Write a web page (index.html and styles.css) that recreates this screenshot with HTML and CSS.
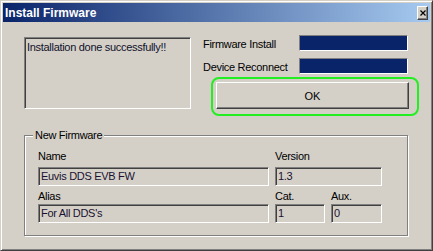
FILE: index.html
```html
<!DOCTYPE html>
<html lang="en">
<head>
    <meta charset="UTF-8">
    <meta name="viewport" content="width=device-width, initial-scale=1.0">
    <title>Install Firmware</title>
    <link rel="stylesheet" href="styles.css">
</head>
<body>
    <div class="window">
        <div class="titlebar">
            <span class="title">Install Firmware</span>
            <button class="close" title="Close">
                <svg width="6" height="6" viewBox="0 0 6 6"><path d="M0.5 0.5 L5.5 5.5 M5.5 0.5 L0.5 5.5" stroke="#000" stroke-width="1.2" fill="none"/></svg>
            </button>
        </div>

        <div class="content">
            <div class="top">
                <div class="message">Installation done successfully!!</div>

                <div class="status">
                    <div class="status-grid">
                        <span class="status-label">Firmware Install</span>
                        <div class="bar"></div>
                        <span class="status-label">Device Reconnect</span>
                        <div class="bar"></div>
                    </div>
                    <div class="focus-ring">
                        <button class="btn-ok">OK</button>
                    </div>
                </div>
            </div>

            <!-- Riquadro nuovo firmware -->
            <div class="group">
                <span class="legend">New Firmware</span>
                <div class="fields">
                    <div class="field field-top field-wide">
                        <span class="label">Name</span>
                        <div class="input">Euvis DDS EVB FW</div>
                    </div>
                    <div class="field field-top field-span">
                        <span class="label">Version</span>
                        <div class="input">1.3</div>
                    </div>
                    <div class="field field-bottom">
                        <span class="label">Alias</span>
                        <div class="input">For All DDS's</div>
                    </div>
                    <div class="field field-bottom">
                        <span class="label">Cat.</span>
                        <div class="input">1</div>
                    </div>
                    <div class="field field-bottom">
                        <span class="label">Aux.</span>
                        <div class="input">0</div>
                    </div>
                </div>
            </div>
        </div>
    </div>
</body>
</html>
```

FILE: styles.css
```css
/* Finestra stile Windows classico */
body {
    margin: 0;
    padding: 0;
    font-family: 'Liberation Sans', Arial, sans-serif;
    font-size: 11px;
    letter-spacing: -0.3px;
    color: #000;
    background: #d4d0c8;
}

.window {
    width: 433px;
    height: 251px;
    box-sizing: border-box;
    background: #d4d0c8;
    border: 1px solid;
    border-color: #d4d0c8 #404040 #404040 #d4d0c8;
    box-shadow: inset 1px 1px #fff, inset -1px -1px #808080;
    padding: 2px;
}

.titlebar {
    height: 19px;
    display: flex;
    align-items: center;
    justify-content: space-between;
    background: linear-gradient(to right, #0a246a, #a6caf0);
}

.title {
    color: #fff;
    font-weight: bold;
    font-size: 12px;
    letter-spacing: 0;
    padding-left: 2px;
}

.close {
    width: 11px;
    height: 14px;
    margin: 1px 2px 0 0;
    padding: 0;
    display: flex;
    align-items: center;
    justify-content: center;
    background: #d4d0c8;
    border: 1px solid;
    border-color: #fff #404040 #404040 #fff;
    box-shadow: inset -1px -1px #808080;
    box-sizing: border-box;
}

.content {
    padding: 15px 0 0 21px;
}

.top {
    display: flex;
    align-items: flex-start;
}

.message {
    width: 167px;
    height: 72px;
    box-sizing: border-box;
    border: 1px solid;
    border-color: #808080 #fff #fff #808080;
    box-shadow: inset 1px 1px #404040, inset -1px -1px #d4d0c8;
    padding: 3px 2px;
    line-height: 13px;
    color: #10102a;
}

.status {
    margin: -2px 0 0 12px;
}

.status-grid {
    display: grid;
    grid-template-columns: 96px 109px;
    grid-auto-rows: 16px;
    row-gap: 7px;
    align-items: center;
}

.status-label {
    line-height: 13px;
    padding-top: 2px;
}

.bar {
    height: 16px;
    box-sizing: border-box;
    border: 1px solid;
    border-color: #808080 #fff #fff #808080;
    background: #0a246a;
}

.focus-ring {
    width: 208px;
    height: 39px;
    box-sizing: border-box;
    margin: 3px 0 0 8px;
    padding: 3px 0 0 3px;
    border: 2px solid #22ee22;
    border-radius: 8px;
}

.btn-ok {
    width: 193px;
    height: 27px;
    box-sizing: border-box;
    padding: 0;
    font-family: 'Liberation Sans', Arial, sans-serif;
    font-size: 11px;
    color: #000;
    background: #d4d0c8;
    border: 1px solid;
    border-color: #fff #404040 #404040 #fff;
    box-shadow: inset -1px -1px #808080;
}

.group {
    position: relative;
    width: 384px;
    height: 101px;
    box-sizing: border-box;
    margin-top: 19px;
    border: 1px solid #808080;
    box-shadow: inset 1px 1px #fff, 1px 1px #fff;
}

.legend {
    position: absolute;
    top: -7px;
    left: 8px;
    padding: 0 2px;
    line-height: 13px;
    background: #d4d0c8;
}

.fields {
    display: grid;
    grid-template-columns: 231px 50px 51px;
    column-gap: 6px;
    padding: 14px 0 0 13px;
}

.field-span {
    grid-column: span 2;
}

.label {
    display: block;
    line-height: 13px;
}

.field-top .label {
    margin-bottom: 4px;
}

.field-bottom {
    margin-top: 4px;
}

.field-bottom .label {
    margin-bottom: 1px;
}

.input {
    height: 19px;
    box-sizing: border-box;
    border: 1px solid;
    border-color: #808080 #fff #fff #808080;
    box-shadow: inset 1px 1px #404040, inset -1px -1px #d4d0c8;
    padding: 0 2px;
    line-height: 17px;
    color: #1a1030;
    white-space: nowrap;
}
```
